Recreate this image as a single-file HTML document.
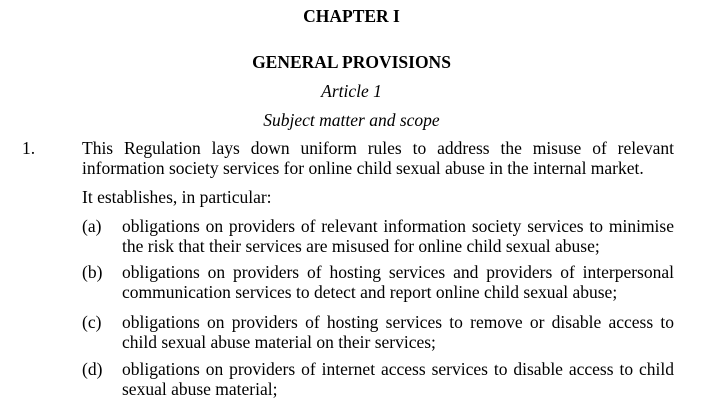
<!DOCTYPE html>
<html><head><style>
body{margin:0;width:703px;height:418px;background:#fff;position:relative;overflow:hidden;font-family:"Liberation Serif",serif;font-size:17.5px;color:#000}
.l{position:absolute;line-height:20px;white-space:nowrap}
.c{left:0;width:703px;text-align:center}
.j{text-align:justify;text-align-last:justify;white-space:normal}
b{font-weight:bold}
</style></head><body>
<div class="l c" style="top:6px"><b>CHAPTER I</b></div>
<div class="l c" style="top:52px"><b>GENERAL PROVISIONS</b></div>
<div class="l c" style="top:81px"><i>Article 1</i></div>
<div class="l c" style="top:110px"><i>Subject matter and scope</i></div>
<div class="l" style="top:138px;left:22px">1.</div>
<div class="l j" style="top:138px;left:82px;width:592px">This Regulation lays down uniform rules to address the misuse of relevant</div>
<div class="l" style="top:158px;left:82px">information society services for online child sexual abuse in the internal market.</div>
<div class="l" style="top:187px;left:82px">It establishes, in particular:</div>
<div class="l" style="top:216px;left:82px">(a)</div>
<div class="l j" style="top:216px;left:122px;width:552px">obligations on providers of relevant information society services to minimise</div>
<div class="l" style="top:236px;left:122px">the risk that their services are misused for online child sexual abuse;</div>
<div class="l" style="top:262px;left:82px">(b)</div>
<div class="l j" style="top:262px;left:122px;width:552px">obligations on providers of hosting services and providers of interpersonal</div>
<div class="l" style="top:282px;left:122px">communication services to detect and report online child sexual abuse;</div>
<div class="l" style="top:312px;left:82px">(c)</div>
<div class="l j" style="top:312px;left:122px;width:552px">obligations on providers of hosting services to remove or disable access to</div>
<div class="l" style="top:332px;left:122px">child sexual abuse material on their services;</div>
<div class="l" style="top:359px;left:82px">(d)</div>
<div class="l j" style="top:359px;left:122px;width:552px">obligations on providers of internet access services to disable access to child</div>
<div class="l" style="top:379px;left:122px">sexual abuse material;</div>
</body></html>
